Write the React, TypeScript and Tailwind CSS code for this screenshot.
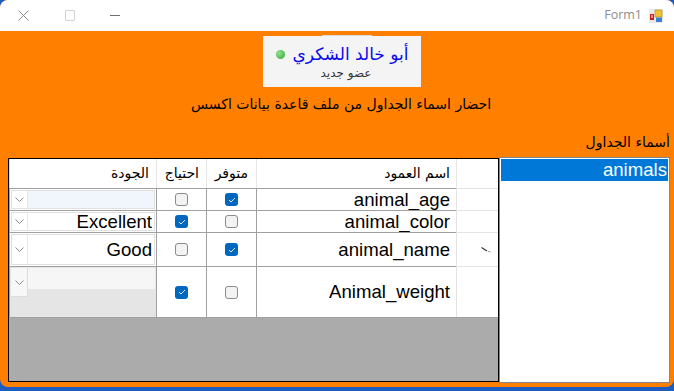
import React from 'react';

type Row = {
    name: string;
    avail: boolean;
    need: boolean;
    quality: string;
    height: string;
    state: 'blue' | 'plain' | 'gray';
    edit?: boolean;
};

const rows: Row[] = [
    { name: 'animal_age', avail: true, need: false, quality: '', height: 'h-[22px]', state: 'blue' },
    { name: 'animal_color', avail: false, need: true, quality: 'Excellent', height: 'h-[22px]', state: 'plain' },
    { name: 'animal_name', avail: true, need: false, quality: 'Good', height: 'h-[34px]', state: 'plain', edit: true },
    { name: 'Animal_weight', avail: false, need: true, quality: '', height: 'h-[52px]', state: 'gray' },
];

const latin = "font-['Liberation_Sans',Arial,sans-serif]";
const arabic = "font-['DejaVu_Sans',sans-serif]";

const Chevron = () => (
    <svg width="9" height="5" viewBox="0 0 9 5">
        <path d="M0.5 0.5 L4.5 4.5 L8.5 0.5" stroke="#8a8a8a" strokeWidth="1" fill="none" />
    </svg>
);

const CheckBox = ({ checked }: { checked: boolean }) =>
    checked ? (
        <span className="w-[13px] h-[13px] rounded-[3px] bg-[#0067c0] flex items-center justify-center">
            <svg width="8" height="6" viewBox="0 0 8 6">
                <path d="M1 3 L3 5 L7 1" stroke="#dbe9f7" strokeWidth="1" fill="none" />
            </svg>
        </span>
    ) : (
        <span className="w-[13px] h-[13px] rounded-[3px] bg-[#f3f3f3] border border-[#8a8a8a]" />
    );

const ComboCell = ({ row }: { row: Row }) => {
    if (row.state === 'gray') {
        return (
            <div className="h-full flex p-[1px] bg-[#e5e5e5]">
                <div className="w-[17px] flex flex-col">
                    <div className="h-[29px] bg-[#f7f7f7] border-r border-b border-[#dcdcdc] flex items-center justify-center">
                        <Chevron />
                    </div>
                </div>
                <div className="flex-1 flex flex-col">
                    <div className="h-[21px] bg-[#f6f6f6]" />
                    <div className="flex-1 bg-[#e5e5e5]" />
                </div>
            </div>
        );
    }
    return (
        <div className="h-full flex p-[1px]">
            <div className="flex-1 flex border border-[#e0e0e0] bg-white">
                <div className="w-[16px] flex items-center justify-center border-r border-[#e6e6e6] bg-white">
                    <Chevron />
                </div>
                <div
                    className={`flex-1 flex items-center justify-end pr-[2px] leading-[20px] text-[18.6px] text-black ${latin} ${
                        row.state === 'blue' ? 'bg-[#f1f6fc]' : 'bg-white'
                    }`}
                >
                    {row.quality}
                </div>
            </div>
        </div>
    );
};

const FormIcon = () => (
    <svg width="14" height="14" viewBox="0 0 14 14">
        <rect x="0" y="0" width="14" height="14" fill="#e9e9e9" />
        <rect x="6" y="1" width="7" height="7" fill="#f2c230" stroke="#b08a18" strokeWidth="0.6" />
        <rect x="1" y="5" width="4" height="6" fill="#c81e1e" />
        <rect x="2.5" y="6" width="1" height="3" fill="#fff" />
        <rect x="7" y="8.5" width="6" height="4.5" fill="#3b7fd6" />
    </svg>
);

export default function App() {
    return (
        <div className="w-[674px] h-[391px] bg-[#1f5cc0] overflow-hidden">
            <div className="w-[674px] h-[387px] rounded-[8px] overflow-hidden flex flex-col bg-[#ff8000]">
                {/* title bar */}
                <div className="h-[31px] bg-white flex items-center shrink-0">
                    <svg className="ml-[18px]" width="11" height="11" viewBox="0 0 11 11">
                        <path d="M0.5 0.5 L10.5 10.5 M10.5 0.5 L0.5 10.5" stroke="#8c8c8c" strokeWidth="1" />
                    </svg>
                    <div className="ml-[36px] w-[10px] h-[11px] border border-[#d2d2d2] rounded-[1px]" />
                    <div className="ml-[35px] w-[10px] h-[1px] bg-[#6f6f6f]" />
                    <div className="flex-1" />
                    <span className="text-[12.5px] text-[#8c8c8c] font-['Open_Sans',sans-serif] mr-[7px]">Form1</span>
                    <div className="mr-[11px]">
                        <FormIcon />
                    </div>
                </div>

                {/* user card */}
                <div className="ml-[322px] mt-[4px] w-[50px] h-[1px] bg-[#dadada]" />
                <div className="ml-[263px] w-[158px] h-[51px] bg-[#f4f4f4] flex flex-col items-center" dir="rtl">
                    <div className="mt-[7px] h-[22px] flex items-center gap-[8px]">
                        <span className={`text-[17px] leading-none text-[#0a0aeb] ${arabic}`}>أبو خالد الشكري</span>
                        <span className="w-[9px] h-[9px] rounded-full bg-[radial-gradient(circle_at_35%_35%,#8fe08f,#2fa82f)]" />
                    </div>
                    <span className={`mt-[2px] ml-[8px] text-[12px] leading-none text-[#333] ${arabic}`}>عضو جديد</span>
                </div>

                {/* subtitle */}
                <div className="mt-[7px] h-[20px] pl-[8px] flex justify-center items-center">
                    <span dir="rtl" className={`text-[14px] text-black ${arabic}`}>احضار اسماء الجداول من ملف قاعدة بيانات اكسس</span>
                </div>

                {/* list label */}
                <div className="mt-[18px] h-[20px] flex justify-end items-center pr-[4px]">
                    <span dir="rtl" className={`text-[14px] text-black ${arabic}`}>أسماء الجداول</span>
                </div>

                <div className="mt-[5px] flex items-start">
                    {/* grid */}
                    <div className="mt-[1px] ml-[8px] w-[491px] h-[224px] border border-black bg-[#ababab] flex flex-col overflow-hidden">
                        <div className="grid grid-cols-[147px_50px_50px_200px_42px] h-[29px] bg-white">
                            <div className={`border-l border-[#d6d6d6] flex items-center justify-end pr-[7px] text-[14px] ${arabic}`}>الجودة</div>
                            <div className={`border-l border-[#e6e6e6] flex items-center justify-end pr-[7px] text-[14px] ${arabic}`}>احتياج</div>
                            <div className={`border-l border-[#e6e6e6] flex items-center justify-end pr-[8px] text-[14px] ${arabic}`}>متوفر</div>
                            <div className={`border-l border-[#e6e6e6] flex items-center justify-end pr-[6px] text-[14px] ${arabic}`}>اسم العمود</div>
                            <div className="border-l border-[#e6e6e6]" />
                        </div>
                        {rows.map((row, i) => (
                            <div
                                key={row.name}
                                className={`grid grid-cols-[147px_50px_50px_200px_42px] ${row.height} bg-white ${
                                    i === rows.length - 1 ? 'border-b border-[#a0a0a0]' : ''
                                }`}
                            >
                                <div className="border-t border-l border-[#a0a0a0] overflow-hidden">
                                    <ComboCell row={row} />
                                </div>
                                <div className="border-t border-l border-[#a0a0a0] flex items-center justify-center">
                                    <CheckBox checked={row.need} />
                                </div>
                                <div className="border-t border-l border-[#a0a0a0] flex items-center justify-center">
                                    <CheckBox checked={row.avail} />
                                </div>
                                <div
                                    className={`border-t border-l border-[#a0a0a0] flex items-center justify-end pr-[6px] overflow-hidden leading-[20px] text-[18.6px] text-black ${latin}`}
                                >
                                    {row.name}
                                </div>
                                <div className="border-t border-l border-[#e3e3e3] flex items-center justify-end pr-[7px]">
                                    {row.edit && (
                                        <svg width="10" height="6" viewBox="0 0 10 6">
                                            <path d="M0.5 0.5 L6 4" stroke="#333" strokeWidth="1.2" />
                                            <path d="M7 4.5 L9.5 5" stroke="#9a9a9a" strokeWidth="1" />
                                        </svg>
                                    )}
                                </div>
                            </div>
                        ))}
                    </div>

                    {/* list box */}
                    <div className="w-[171px] h-[226px] border border-[#82878f] bg-white p-[1px]">
                        <div className={`h-[22px] bg-[#0078d7] flex items-center justify-end pr-[1px] text-[18.6px] leading-none text-white ${latin}`}>
                            animals
                        </div>
                    </div>
                </div>
            </div>
        </div>
    );
}
